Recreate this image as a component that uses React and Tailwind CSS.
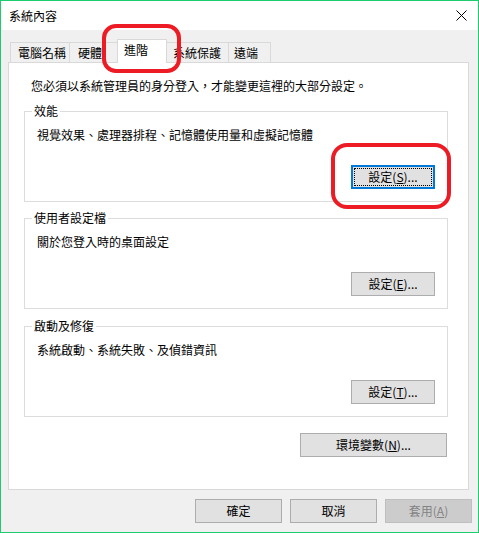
import React from "react";

// Win10 dialog look: plain buttons, tab strip, group boxes
const font = { fontFamily: '"Noto Sans CJK TC", "Noto Sans", sans-serif' };

function Btn({ children, width = "w-[84px]", focused = false, disabled = false }) {
  if (focused) {
    return (
      <div className={`${width} h-[24px] border-2 border-[#0078d7] bg-[#e1e1e1] p-px`}>
        <div className="h-full w-full border border-dotted border-black flex items-center justify-center text-[12px] leading-none text-black">
          {children}
        </div>
      </div>
    );
  }
  return (
    <div
      className={`${width} h-[24px] border flex items-center justify-center text-[12px] leading-none ${
        disabled ? "border-[#bfbfbf] bg-[#cccccc] text-[#838383]" : "border-[#adadad] bg-[#e1e1e1] text-black"
      }`}
    >
      {children}
    </div>
  );
}

function Group({ title, desc, button, focused, mt }) {
  return (
    <div className={`relative ${mt} ml-[15px] w-[424px] h-[91px] border border-[#dcdcdc] flex flex-col`}>
      <span className="absolute -top-[9px] left-[7px] bg-white px-[2px] text-[12px] leading-[16px] text-black">{title}</span>
      <div className="mt-[15px] pl-[12px] text-[12px] leading-[16px] text-black">{desc}</div>
      <div className="mt-[22px] flex justify-end pr-[12px]">
        <Btn focused={focused}>{button}</Btn>
      </div>
    </div>
  );
}

export default function App() {
  return (
    <div style={font} className="relative w-[479px] h-[533px] border border-[#1dcc6f] flex flex-col bg-[#f0f0f0] overflow-hidden">
      {/* title bar */}
      <div className="h-[29px] bg-white flex items-center justify-between pl-[8px] pr-[11px]">
        <span className="text-[12px] leading-none text-black">系統內容</span>
        <svg width="11" height="11" viewBox="0 0 11 11">
          <path d="M0.5 0.5L10.5 10.5M10.5 0.5L0.5 10.5" stroke="#000" strokeWidth="1" />
        </svg>
      </div>

      {/* tabs */}
      <div className="mt-[9px] h-[23px] flex items-end pl-[9px] text-[12px] leading-none text-black">
        <div className="w-[59px] h-[20px] border-l border-t border-[#d9d9d9] flex items-center pl-[7px]">電腦名稱</div>
        <div className="w-[48px] h-[20px] border-l border-t border-[#d9d9d9] flex items-center pl-[8px]">硬體</div>
        <div className="relative z-10 -mb-px w-[50px] h-[24px] bg-white border-l border-t border-r border-[#d9d9d9] flex items-start pt-[4px] pl-[6px]">進階</div>
        <div className="w-[61px] h-[20px] border-t border-[#d9d9d9] flex items-center pl-[6px]">系統保護</div>
        <div className="w-[43px] h-[20px] border-l border-t border-r border-[#d9d9d9] flex items-center pl-[5px]">遠端</div>
      </div>

      {/* panel */}
      <div className="ml-[7px] w-[461px] h-[428px] bg-white border border-[#d9d9d9] flex flex-col">
        <div className="mt-[15px] pl-[22px] text-[12px] leading-[16px] text-black">
          您必須以系統管理員的身分登入，才能變更這裡的大部分設定。
        </div>
        <Group
          mt="mt-[17px]"
          title="效能"
          desc="視覺效果、處理器排程、記憶體使用量和虛擬記憶體"
          focused
          button={<>設定(<u>S</u>)...</>}
        />
        <Group
          mt="mt-[16px]"
          title="使用者設定檔"
          desc="關於您登入時的桌面設定"
          button={<>設定(<u>E</u>)...</>}
        />
        <Group
          mt="mt-[17px]"
          title="啟動及修復"
          desc="系統啟動、系統失敗、及偵錯資訊"
          button={<>設定(<u>T</u>)...</>}
        />
        <div className="mt-[16px] flex justify-end pr-[21px]">
          <Btn width="w-[147px]">環境變數(<u>N</u>)...</Btn>
        </div>
      </div>

      {/* dialog buttons */}
      <div className="mt-[9px] flex justify-end gap-[8px] pr-[6px]">
        <Btn width="w-[87px]">確定</Btn>
        <Btn width="w-[87px]">取消</Btn>
        <Btn width="w-[87px]" disabled>套用(<u>A</u>)</Btn>
      </div>

      {/* red annotation marks */}
      <div className="absolute left-[101px] top-[23px] w-[79px] h-[49px] border-4 border-[#ed1c24] rounded-[14px] pointer-events-none z-20" />
      <div className="absolute left-[330px] top-[142px] w-[120px] h-[66px] border-4 border-[#ed1c24] rounded-[16px] pointer-events-none z-20" />
    </div>
  );
}
